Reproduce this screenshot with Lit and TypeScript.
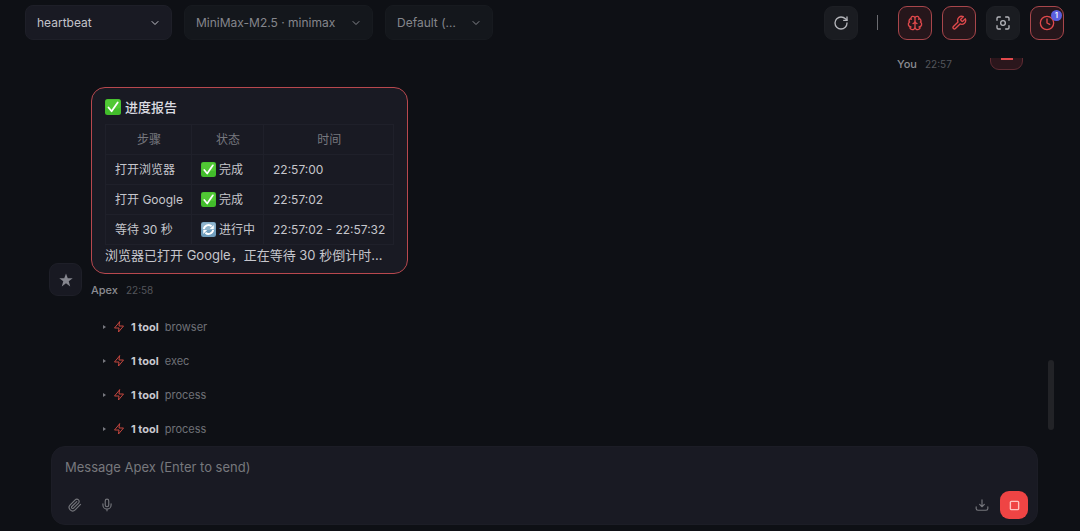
import { LitElement, html, css, svg, nothing } from "lit";
import { customElement, property } from "lit/decorators.js";

const glyphs = {
  chevron: svg`<path d="m6 9 6 6 6-6"/>`,
  refresh: svg`<path d="M21 12a9 9 0 1 1-9-9c2.500 0 4.900 1 6.700 2.700L21 8"/><path d="M21 3v5h-5"/>`,
  brain: svg`<path d="M12 18V5M15 13a4.170 4.170 0 0 1-3-4 4.170 4.170 0 0 1-3 4M17.600 6.500A3 3 0 1 0 12 5a3 3 0 1 0-5.600 1.500M18 5.130a4 4 0 0 1 2.530 5.770M18 18a4 4 0 0 0 2-7.460M19.970 17.480A4 4 0 1 1 12 18a4 4 0 1 1-7.970-.520M6 18a4 4 0 0 1-2-7.460M6 5.130a4 4 0 0 0-2.530 5.770"/>`,
  wrench: svg`<path d="M14.700 6.300a1 1 0 0 0 0 1.400l1.600 1.600a1 1 0 0 0 1.400 0l3.770-3.770a6 6 0 0 1-7.940 7.940l-6.910 6.910a2.120 2.120 0 0 1-3-3l6.910-6.910a6 6 0 0 1 7.940-7.940l-3.760 3.760z"/>`,
  focus: svg`<circle cx="12" cy="12" r="3.500"/><path d="M3 8V5a2 2 0 0 1 2-2h3M16 3h3a2 2 0 0 1 2 2v3M21 16v3a2 2 0 0 1-2 2h-3M8 21H5a2 2 0 0 1-2-2v-3"/>`,
  clock: svg`<circle cx="12" cy="12" r="10"/><path d="M12 6v6l4 2"/>`,
  zap: svg`<path d="M13 2 3 14h9l-1 8 10-12h-9l1-8z"/>`,
  clip: svg`<path d="m21.440 11.050-9.190 9.190a6 6 0 0 1-8.490-8.490l8.570-8.570A4 4 0 1 1 18 8.840l-8.590 8.570a2 2 0 0 1-2.830-2.830l8.490-8.480"/>`,
  mic: svg`<path d="M12 2a3 3 0 0 0-3 3v7a3 3 0 0 0 6 0V5a3 3 0 0 0-3-3Z"/><path d="M19 10v2a7 7 0 0 1-14 0v-2M12 19v3"/>`,
  download: svg`<path d="M22 15v3a3 3 0 0 1-3 3H5a3 3 0 0 1-3-3v-3M8 11l4 4 4-4M12 15V3"/>`,
  stop: svg`<rect x="3" y="3" width="18" height="18" rx="2"/>`,
  minus: svg`<path d="M1 12h22"/>`,
};

type Glyph = keyof typeof glyphs;

@customElement("ui-icon")
class UiIcon extends LitElement {
  @property() name: Glyph = "clock";
  static styles = css`
    :host { display: block; flex: none; width: 16px; height: 16px; }
    svg {
      display: block; width: 100%; height: 100%; fill: none; stroke: currentColor;
      stroke-width: var(--stroke, 2); stroke-linecap: round; stroke-linejoin: round;
    }
  `;
  render() {
    return html`<svg viewBox="0 0 24 24" aria-hidden="true">${glyphs[this.name]}</svg>`;
  }
}

@customElement("status-mark")
class StatusMark extends LitElement {
  @property() kind: "done" | "running" = "done";
  static styles = css`
    :host { display: block; flex: none; width: 15px; height: 15px; }
    svg { display: block; width: 100%; height: 100%; }
  `;
  render() {
    return this.kind === "done"
      ? html`<svg viewBox="0 0 16 16" role="img" aria-label="✅">
          <rect width="16" height="16" rx="2.500" fill="#42bd2b" />
          <rect x=".5" y=".5" width="15" height="9" rx="2" fill="#5bcf3c" opacity=".6" />
          <path d="M3.500 8.500 6.600 12.300 12.700 3.500" fill="none" stroke="#fff" stroke-width="1.800" stroke-linecap="round" stroke-linejoin="round" />
        </svg>`
      : html`<svg viewBox="0 0 16 16" role="img" aria-label="🔄">
          <rect width="16" height="16" rx="2.500" fill="#6f9dbd" />
          <rect x=".5" y=".5" width="15" height="8" rx="2" fill="#9dbdd3" opacity=".7" />
          <path d="M3 7.500A5 5 0 0 1 11.300 4.500M13 8.500A5 5 0 0 1 4.700 11.500" fill="none" stroke="#fff" stroke-width="2" />
          <path d="M13.600 3.200v4.200H9.400zM2.400 12.800V8.600h4.200z" fill="#fff" />
        </svg>`;
  }
}

interface Step { step: string; kind: "done" | "running"; state: string; time: string }

@customElement("app-root")
class AppRoot extends LitElement {
  steps: Step[] = [
    { step: "打开浏览器", kind: "done", state: "完成", time: "22:57:00" },
    { step: "打开 Google", kind: "done", state: "完成", time: "22:57:02" },
    { step: "等待 30 秒", kind: "running", state: "进行中", time: "22:57:02 - 22:57:32" },
  ];
  tools = ["browser", "exec", "process", "process"];
  pickers = [
    { label: "Session", value: "heartbeat", cls: "session" },
    { label: "Model", value: "MiniMax-M2.5 · minimax", cls: "model" },
    { label: "Thinking level", value: "Default (…", cls: "level" },
  ];
  actions: { icon: Glyph; label: string; on: boolean; count?: number }[] = [
    { icon: "brain", label: "Thinking", on: true },
    { icon: "wrench", label: "Tools", on: true },
    { icon: "focus", label: "Focus", on: false },
    { icon: "clock", label: "Scheduled", on: true, count: 1 },
  ];

  static styles = css`
    :host {
      display: flex; flex-direction: column; box-sizing: border-box; height: 100vh;
      padding-bottom: 6px; overflow: hidden; background: #0e1015; color: #d0d0d6;
      font: 13px/20px Inter, "Noto Sans CJK SC", sans-serif;
    }
    * { box-sizing: border-box; }
    button, select, textarea { font: inherit; color: inherit; margin: 0; }
    button { display: grid; place-items: center; padding: 0; border: 0; background: none; cursor: pointer; }

    .bar { display: flex; align-items: center; justify-content: space-between; height: 58px; flex: none; padding: 5px 16px 18px 25px; }
    .pickers { display: flex; gap: 12px; }
    .picker { display: grid; align-items: center; color: #85868c; }
    .picker select, .picker ui-icon { grid-area: 1 / 1; }
    .picker select {
      appearance: none; width: 100%; height: 35px; padding: 0 32px 0 11px; border: 1px solid #171a1f;
      border-radius: 8px; background: #14171c; font-size: 12px; text-overflow: ellipsis;
    }
    .picker ui-icon { justify-self: end; width: 12px; height: 12px; margin-right: 11px; pointer-events: none; }
    .session { width: 147px; color: #c3c3ca; }
    .session select { background: #191a23; border-color: #1e1f28; }
    .model { width: 189px; }
    .level { width: 108px; }

    .actions { display: flex; align-items: center; gap: 10px; }
    .square { position: relative; width: 34px; height: 34px; border: 1px solid #1d1f24; border-radius: 9px; background: #1a1c21; color: #b4b5ba; }
    .square.on { border-color: #a8464b; background: #26161b; color: #e0494c; }
    .rule { width: 1px; height: 15px; margin: 0 10px 0 9px; background: #6b6c71; }
    .count {
      position: absolute; top: 3px; right: 1px; width: 11px; height: 11px; border-radius: 50%;
      background: #5b5fe0; color: #fff; font-size: 8px; line-height: 11px; font-weight: 500;
    }

    .log { position: relative; display: flex; flex-direction: column; justify-content: flex-end; flex: 1; min-height: 0; overflow: hidden; padding: 0 57px 0 49px; }
    .turn { display: flex; align-items: flex-end; gap: 9px; flex: none; }
    .turn.mine { justify-content: flex-end; margin-bottom: 17px; }
    .mine .said { min-width: 84px; }
    .avatar { display: grid; place-items: center; width: 33px; height: 33px; flex: none; border: 1px solid #1e1f28; border-radius: 9px; background: #181922; color: #85868e; }
    .avatar svg { width: 14px; height: 14px; fill: currentColor; }
    .mine .avatar { border-color: #5f2b32; background: #2b161c; color: #e0494c; }
    .mine .avatar ui-icon { width: 12px; height: 12px; margin-top: 10px; --stroke: 4; }
    .meta { display: flex; gap: 8px; margin-top: 10px; font-size: 11px; line-height: 12px; color: #8b8c92; font-weight: 500; }
    .meta time { font-size: 10px; font-weight: 400; color: #54555b; }
    .bubble { padding: 9px 13px 8px; border: 1px solid #b8484e; border-radius: 14px; background: #191a23; }
    .title { display: flex; align-items: center; gap: 4px; margin: 0 0 7px; font-size: 13px; line-height: 20px; font-weight: 500; color: #dcdce1; }
    .title status-mark { width: 16px; height: 16px; }
    .bubble p { margin: 0; color: #c6c6cc; }
    .steps { border-collapse: collapse; font-size: 12px; line-height: 18px; color: #c6c6cc; }
    .steps th, .steps td { height: 30px; padding: 0 8px 0 9px; border: 1px solid #1f202a; text-align: left; white-space: nowrap; }
    .steps th { text-align: center; font-weight: 400; color: #77787f; }
    .state { display: flex; align-items: center; gap: 3px; }

    .tools { margin: 14px 0 0; padding: 0; list-style: none; flex: none; }
    .tool { width: auto; height: 34px; padding-left: 54px; display: flex; align-items: center; gap: 6px; font-size: 11px; color: #6f7077; }
    .tool b { font-weight: 700; color: #c9c9cf; }
    .tool ui-icon { width: 12px; height: 12px; color: #c6473f; }
    .caret { width: 0; height: 0; margin-right: 1px; border: 2px solid transparent; border-left: 3px solid #77787f; border-right: 0; }
    .thumb { position: absolute; right: 26px; bottom: 16px; width: 6px; height: 70px; border-radius: 3px; background: #222327; }

    .composer { flex: none; display: flex; flex-direction: column; margin: 0 42px 0 51px; padding: 10px 9px 5px 13px; border: 1px solid #1c1d26; border-radius: 14px; background: #191a23; color: #74757b; }
    .composer textarea { display: block; width: 100%; height: 20px; padding: 0; border: 0; outline: 0; resize: none; background: none; color: #d0d0d6; line-height: 20px; }
    .composer textarea::placeholder { color: #77787d; opacity: 1; }
    .row { display: flex; align-items: center; justify-content: space-between; margin-top: 14px; }
    .side { display: flex; align-items: center; gap: 12px; }
    .side.end { gap: 8px; }
    .row ui-icon { width: 14px; height: 14px; }
    .plain { width: 20px; height: 28px; }
    .stop { width: 28px; height: 28px; border-radius: 9px; background: #ef4444; color: #ffc2bf; }
    .row .stop ui-icon { width: 11px; height: 11px; --stroke: 3; }
  `;

  render() {
    return html`
      <header class="bar">
        <div class="pickers">
          ${this.pickers.map((p) => html`
            <div class="picker ${p.cls}">
              <select aria-label=${p.label}><option>${p.value}</option></select>
              <ui-icon name="chevron"></ui-icon>
            </div>`)}
        </div>
        <div class="actions">
          <button class="square" aria-label="Refresh"><ui-icon name="refresh"></ui-icon></button>
          <span class="rule"></span>
          ${this.actions.map((a) => html`
            <button class="square ${a.on ? "on" : ""}" aria-label=${a.label} aria-pressed=${a.on}>
              <ui-icon name=${a.icon}></ui-icon>
              ${a.count ? html`<span class="count">${a.count}</span>` : nothing}
            </button>`)}
        </div>
      </header>

      <main class="log">
        <article class="turn mine">
          <div class="said"><div class="meta"><span>You</span><time>22:57</time></div></div>
          <div class="avatar"><ui-icon name="minus"></ui-icon></div>
        </article>
        <article class="turn">
          <div class="avatar">
            <svg viewBox="0 0 24 24" aria-hidden="true"><path d="m12 1 3 8h8.500l-6.800 5.200L19.200 23 12 17.700 4.800 23l2.500-8.800L.5 9H9z"/></svg>
          </div>
          <div class="said">
            <div class="bubble">
              <h2 class="title"><status-mark kind="done"></status-mark>进度报告</h2>
              <table class="steps">
                <thead><tr><th>步骤</th><th>状态</th><th>时间</th></tr></thead>
                <tbody>
                  ${this.steps.map((s) => html`
                    <tr>
                      <td>${s.step}</td>
                      <td><div class="state"><status-mark kind=${s.kind}></status-mark>${s.state}</div></td>
                      <td>${s.time}</td>
                    </tr>`)}
                </tbody>
              </table>
              <p>浏览器已打开 Google，正在等待 30 秒倒计时...</p>
            </div>
            <div class="meta"><span>Apex</span><time>22:58</time></div>
          </div>
        </article>
        <ul class="tools">
          ${this.tools.map((t) => html`
            <li><button class="tool"><i class="caret"></i><ui-icon name="zap"></ui-icon><b>1 tool</b><span>${t}</span></button></li>`)}
        </ul>
        <div class="thumb"></div>
      </main>

      <form class="composer" @submit=${(e: Event) => e.preventDefault()}>
        <textarea aria-label="Message" rows="1" placeholder="Message Apex (Enter to send)"></textarea>
        <div class="row">
          <div class="side">
            <button type="button" class="plain" aria-label="Attach file"><ui-icon name="clip"></ui-icon></button>
            <button type="button" class="plain" aria-label="Voice input"><ui-icon name="mic"></ui-icon></button>
          </div>
          <div class="side end">
            <button type="button" class="plain" aria-label="Export"><ui-icon name="download"></ui-icon></button>
            <button type="button" class="stop" aria-label="Stop"><ui-icon name="stop"></ui-icon></button>
          </div>
        </div>
      </form>
    `;
  }
}
